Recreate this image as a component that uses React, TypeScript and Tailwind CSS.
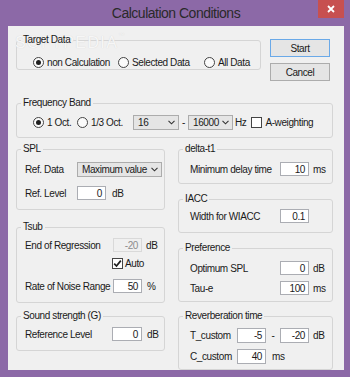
import React from 'react';

type Children = { children?: React.ReactNode };

const Group: React.FC<Children & { title: string; className?: string }> = ({ title, className = '', children }) => (
  <fieldset className={`border border-[#d5d5d5] rounded-[3px] min-w-0 ${className}`}>
    <legend className="relative ml-[4px] px-[2px] leading-[12px]">{title}</legend>
    {children}
  </fieldset>
);

const Chevron = () => (
  <svg width="7" height="5" viewBox="0 0 7 5" className="shrink-0">
    <polyline points="0.5,0.8 3.5,3.8 6.5,0.8" fill="none" stroke="#333" strokeWidth="1.1" />
  </svg>
);

const Select: React.FC<{ value: string; className?: string }> = ({ value, className = '' }) => (
  <div className={`h-[15px] border border-[#acacac] bg-[#e5e5e5] flex items-center justify-between pl-[4px] pr-[3px] ${className}`}>
    <span>{value}</span>
    <Chevron />
  </div>
);

const Input: React.FC<{ value: string; disabled?: boolean; className?: string }> = ({ value, disabled, className = 'w-[29px]' }) => (
  <div
    className={`${className} h-[14px] border flex items-center justify-end pr-[3px] ${
      disabled ? 'border-[#d9d9d9] bg-[#f0f0f0] text-[#8d8d8d]' : 'border-[#abadb3] bg-white'
    }`}
  >
    {value}
  </div>
);

const Radio: React.FC<{ checked?: boolean }> = ({ checked }) => (
  <span className="w-[11px] h-[11px] rounded-full border border-[#444] bg-[#fbfbfb] flex items-center justify-center shrink-0">
    {checked && <span className="w-[5px] h-[5px] rounded-full bg-[#1f1f1f]" />}
  </span>
);

const RadioOpt: React.FC<{ label: string; checked?: boolean; className?: string }> = ({ label, checked, className = '' }) => (
  <div className={`flex items-center ${className}`}>
    <Radio checked={checked} />
    <span className="ml-[3px]">{label}</span>
  </div>
);

const Check: React.FC<{ checked?: boolean; className?: string }> = ({ checked, className = '' }) => (
  <span className={`w-[11px] h-[11px] border border-[#444] bg-white flex items-center justify-center shrink-0 ${className}`}>
    {checked && (
      <svg width="9" height="9" viewBox="0 0 9 9">
        <path d="M1.2 4.6 L3.5 7 L7.8 1.6" fill="none" stroke="#1f1f1f" strokeWidth="1.7" />
      </svg>
    )}
  </span>
);

const Btn: React.FC<Children & { primary?: boolean }> = ({ children, primary }) => (
  <button
    type="button"
    className={`w-[60px] h-[18px] border bg-[#e5e5e5] flex items-center justify-center ${
      primary ? 'border-[#6aa9e8]' : 'border-[#acacac]'
    }`}
  >
    {children}
  </button>
);

export default function App() {
  return (
    <div className="w-[350px] h-[377px] bg-[#8c69a7] flex flex-col font-['Liberation_Sans',Arial,sans-serif] text-[10px] tracking-[-0.4px] text-[#1a1a1a]">
      {/* title bar */}
      <div className="h-[26px] relative flex items-center justify-center">
        <span className="text-[14px] tracking-[-0.5px] text-[#2a2a2a] pl-[2px]">Calculation Conditions</span>
        <button type="button" className="absolute right-[6px] top-0 w-[26px] h-[18px] bg-[#c75050] flex items-center justify-center">
          <svg width="8" height="8" viewBox="0 0 8 8">
            <path d="M1 1 L7 7 M7 1 L1 7" stroke="#fff" strokeWidth="1.8" />
          </svg>
        </button>
      </div>

      {/* client area */}
      <div className="relative ml-[8px] mr-[6px] h-[344px] bg-[#f0f0f0]">
        {/* watermark, painted under the group labels */}
        <div className="absolute left-[7px] top-[5px] pointer-events-none text-[16px] tracking-[1.4px] text-[#f6f6f6] [text-shadow:0_0_1px_#d2d2d2]">
          SOFTPEDIA<span className="text-[6px] align-top">™</span>
        </div>

        <div className="flex items-start pl-[8px] pt-[8px]">
          <Group title="Target Data" className="w-[245px] h-[36px]">
            <div className="flex items-center h-[14px] mt-[9px] pl-[16px]">
              <RadioOpt checked label="non Calculation" className="w-[85px]" />
              <RadioOpt label="Selected Data" className="w-[86px]" />
              <RadioOpt label="All Data" />
            </div>
          </Group>
          <div className="ml-[9px] mt-[5px] flex flex-col gap-[6px]">
            <Btn primary>Start</Btn>
            <Btn>Cancel</Btn>
          </div>
        </div>

        <Group title="Frequency Band" className="ml-[8px] mt-[16px] w-[317px] h-[41px]">
          <div className="flex items-center h-[15px] mt-[6px] pl-[16px]">
            <RadioOpt checked label="1 Oct." className="w-[44px]" />
            <RadioOpt label="1/3 Oct." className="w-[56px]" />
            <Select value="16" className="w-[46px]" />
            <span className="w-[9px] text-center">-</span>
            <Select value="16000" className="w-[45px]" />
            <span className="ml-[2px]">Hz</span>
            <Check className="ml-[5px]" />
            <span className="ml-[3px]">A-weighting</span>
          </div>
        </Group>

        <div className="flex gap-[13px] pl-[8px] mt-[5px]">
          <div className="w-[149px] flex flex-col">
            <Group title="SPL" className="h-[67px]">
              <div className="pl-[8px]">
                <div className="flex items-center h-[14px] mt-[7px]">
                  <span className="w-[52px]">Ref. Data</span>
                  <Select value="Maximum value" className="w-[85px]" />
                </div>
                <div className="flex items-center h-[14px] mt-[10px]">
                  <span className="w-[52px]">Ref. Level</span>
                  <Input value="0" />
                  <span className="ml-[6px]">dB</span>
                </div>
              </div>
            </Group>

            <Group title="Tsub" className="mt-[11px] h-[82px]">
              <div className="pl-[8px]">
                <div className="flex items-center h-[14px] mt-[5px]">
                  <span className="w-[88px]">End of Regression</span>
                  <Input value="-20" disabled />
                  <span className="ml-[4px]">dB</span>
                </div>
                <div className="flex items-center h-[14px] mt-[4px] pl-[87px]">
                  <Check checked />
                  <span className="ml-[2px]">Auto</span>
                </div>
                <div className="flex items-center h-[14px] mt-[9px]">
                  <span className="w-[88px]">Rate of Noise Range</span>
                  <Input value="50" />
                  <span className="ml-[5px]">%</span>
                </div>
              </div>
            </Group>

            <Group title="Sound strength (G)" className="mt-[7px] h-[41px]">
              <div className="pl-[8px]">
                <div className="flex items-center h-[14px] mt-[5px]">
                  <span className="w-[87px]">Reference Level</span>
                  <Input value="0" className="w-[30px]" />
                  <span className="ml-[5px]">dB</span>
                </div>
              </div>
            </Group>
          </div>

          <div className="w-[155px] flex flex-col">
            <Group title="delta-t1" className="h-[41px]">
              <div className="pl-[11px]">
                <div className="flex items-center h-[14px] mt-[7px]">
                  <span className="w-[90px]">Minimum delay time</span>
                  <Input value="10" />
                  <span className="ml-[4px]">ms</span>
                </div>
              </div>
            </Group>

            <Group title="IACC" className="mt-[9px] h-[40px]">
              <div className="pl-[11px]">
                <div className="flex items-center h-[14px] mt-[4px]">
                  <span className="w-[90px]">Width for WIACC</span>
                  <Input value="0.1" />
                </div>
              </div>
            </Group>

            <Group title="Preference" className="mt-[9px] h-[60px]">
              <div className="pl-[11px]">
                <div className="flex items-center h-[14px] mt-[7px]">
                  <span className="w-[90px]">Optimum SPL</span>
                  <Input value="0" />
                  <span className="ml-[4px]">dB</span>
                </div>
                <div className="flex items-center h-[14px] mt-[6px]">
                  <span className="w-[90px]">Tau-e</span>
                  <Input value="100" />
                  <span className="ml-[4px]">ms</span>
                </div>
              </div>
            </Group>

            <Group title="Reverberation time" className="mt-[8px] h-[60px]">
              <div className="pl-[11px]">
                <div className="flex items-center h-[15px] mt-[6px]">
                  <span className="w-[47px]">T_custom</span>
                  <Input value="-5" className="w-[29px] h-[15px]" />
                  <span className="w-[14px] text-center">-</span>
                  <Input value="-20" className="w-[29px] h-[15px]" />
                  <span className="ml-[4px]">dB</span>
                </div>
                <div className="flex items-center h-[15px] mt-[6px]">
                  <span className="w-[47px]">C_custom</span>
                  <Input value="40" className="w-[29px] h-[15px]" />
                  <span className="ml-[6px]">ms</span>
                </div>
              </div>
            </Group>
          </div>
        </div>
      </div>
    </div>
  );
}
